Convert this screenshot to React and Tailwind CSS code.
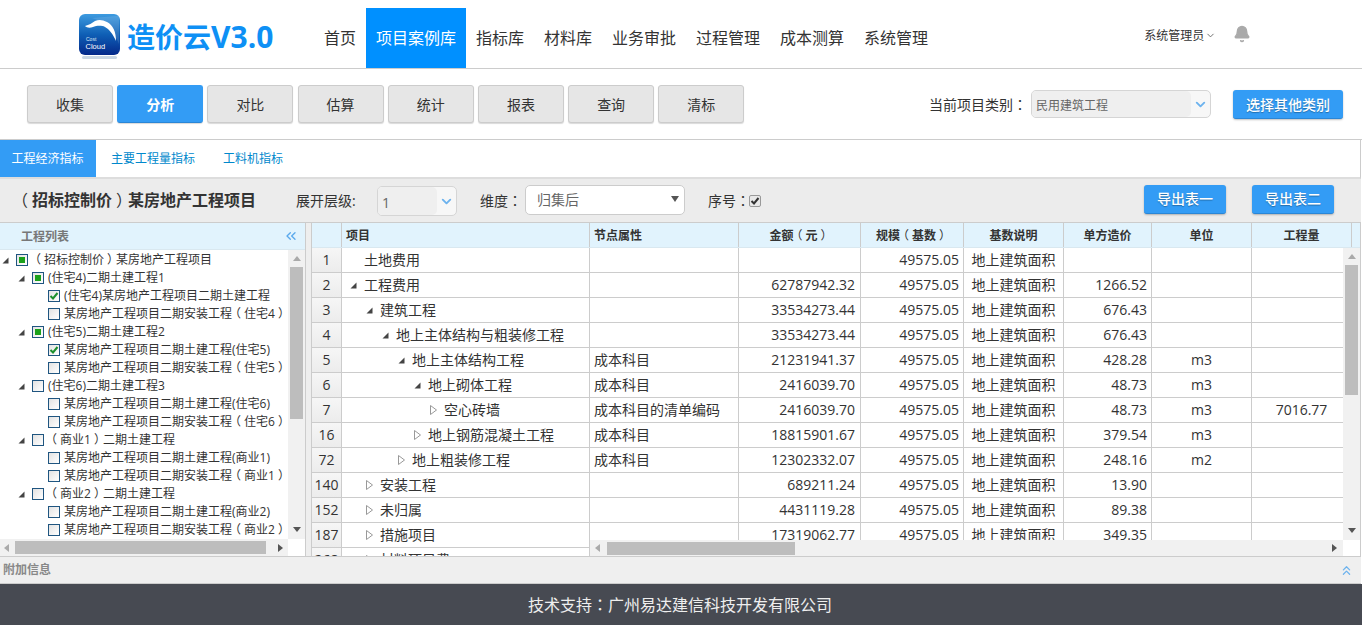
import { Bell, ChevronDown, ChevronsLeft, ChevronsUp } from 'lucide-react';

const navItems = ['首页', '项目案例库', '指标库', '材料库', '业务审批', '过程管理', '成本测算', '系统管理'];
const actions = ['收集', '分析', '对比', '估算', '统计', '报表', '查询', '清标'];
const tabs = ['工程经济指标', '主要工程量指标', '工料机指标'];

// level, state: partial | checked | empty
const treeRows = [
  [0, 'partial', '（招标控制价）某房地产工程项目'],
  [1, 'partial', '(住宅4)二期土建工程1'],
  [2, 'checked', '(住宅4)某房地产工程项目二期土建工程'],
  [2, 'empty', '某房地产工程项目二期安装工程（住宅4）'],
  [1, 'partial', '(住宅5)二期土建工程2'],
  [2, 'checked', '某房地产工程项目二期土建工程(住宅5)'],
  [2, 'empty', '某房地产工程项目二期安装工程（住宅5）'],
  [1, 'empty', '(住宅6)二期土建工程3'],
  [2, 'empty', '某房地产工程项目二期土建工程(住宅6)'],
  [2, 'empty', '某房地产工程项目二期安装工程（住宅6）'],
  [1, 'empty', '（商业1）二期土建工程'],
  [2, 'empty', '某房地产工程项目二期土建工程(商业1)'],
  [2, 'empty', '某房地产工程项目二期安装工程（商业1）'],
  [1, 'empty', '（商业2）二期土建工程'],
  [2, 'empty', '某房地产工程项目二期土建工程(商业2)'],
  [2, 'empty', '某房地产工程项目二期安装工程（商业2）'],
];

const area = '地上建筑面积';
const tableRows = [
  { no: 1, level: 0, icon: null, name: '土地费用', attr: '', amount: '', scale: '49575.05', basis: area, unitCost: '', unit: '', qty: '' },
  { no: 2, level: 0, icon: 'open', name: '工程费用', attr: '', amount: '62787942.32', scale: '49575.05', basis: area, unitCost: '1266.52', unit: '', qty: '' },
  { no: 3, level: 1, icon: 'open', name: '建筑工程', attr: '', amount: '33534273.44', scale: '49575.05', basis: area, unitCost: '676.43', unit: '', qty: '' },
  { no: 4, level: 2, icon: 'open', name: '地上主体结构与粗装修工程', attr: '', amount: '33534273.44', scale: '49575.05', basis: area, unitCost: '676.43', unit: '', qty: '' },
  { no: 5, level: 3, icon: 'open', name: '地上主体结构工程', attr: '成本科目', amount: '21231941.37', scale: '49575.05', basis: area, unitCost: '428.28', unit: 'm3', qty: '' },
  { no: 6, level: 4, icon: 'open', name: '地上砌体工程', attr: '成本科目', amount: '2416039.70', scale: '49575.05', basis: area, unitCost: '48.73', unit: 'm3', qty: '' },
  { no: 7, level: 5, icon: 'closed', name: '空心砖墙', attr: '成本科目的清单编码', amount: '2416039.70', scale: '49575.05', basis: area, unitCost: '48.73', unit: 'm3', qty: '7016.77' },
  { no: 16, level: 4, icon: 'closed', name: '地上钢筋混凝土工程', attr: '成本科目', amount: '18815901.67', scale: '49575.05', basis: area, unitCost: '379.54', unit: 'm3', qty: '' },
  { no: 72, level: 3, icon: 'closed', name: '地上粗装修工程', attr: '成本科目', amount: '12302332.07', scale: '49575.05', basis: area, unitCost: '248.16', unit: 'm2', qty: '' },
  { no: 140, level: 1, icon: 'closed', name: '安装工程', attr: '', amount: '689211.24', scale: '49575.05', basis: area, unitCost: '13.90', unit: '', qty: '' },
  { no: 152, level: 1, icon: 'closed', name: '未归属', attr: '', amount: '4431119.28', scale: '49575.05', basis: area, unitCost: '89.38', unit: '', qty: '' },
  { no: 187, level: 1, icon: 'closed', name: '措施项目', attr: '', amount: '17319062.77', scale: '49575.05', basis: area, unitCost: '349.35', unit: '', qty: '' },
  { no: 268, level: 1, icon: 'closed', name: '材料项目费', attr: '', amount: '', scale: '', basis: '', unitCost: '', unit: '', qty: '' },
];

// full-width brackets and colons sit centred in their cell in the reference
function Punct({ text }) {
  return text.split(/([（）：])/).map((part, i) => {
    if (i % 2 === 0) return part;
    if (part === '：') return <span key={i} className="font-['Noto_Sans_CJK_TC'] font-normal">{part}</span>;
    return <span key={i} className={`inline-block font-normal ${part === '（' ? '-translate-x-[0.25em]' : 'translate-x-[0.25em]'}`}>{part}</span>;
  });
}

function Logo() {
  return (
    <svg width="44" height="46" viewBox="0 0 44 46" className="shrink-0">
      <defs>
        <linearGradient id="logoBg" x1="0" y1="0" x2="0" y2="1">
          <stop offset="0" stopColor="#3d9be0" />
          <stop offset="0.5" stopColor="#0f5fb5" />
          <stop offset="1" stopColor="#04288a" />
        </linearGradient>
      </defs>
      <rect x="1" y="0" width="41" height="41" rx="6" fill="url(#logoBg)" />
      <path d="M38 2 H41 V30 C36 18 28 8 14 4 Z" fill="#fff" opacity="0.12" />
      <path d="M7 12 C11 11 14 9 17 7 C21 5 25 6 29 8 C35 11 38 18 38 27 C35 20 31 15 27 13 C23 11 18 12 15 13 C12 14 9 14 7 12 Z" fill="#fff" />
      <text x="8" y="27" fontSize="5" fill="#dbe9f7" fontFamily="Liberation Sans, sans-serif">Cost</text>
      <text x="7.5" y="35" fontSize="7.5" fill="#fff" fontFamily="Liberation Sans, sans-serif">Cloud</text>
      <rect x="4" y="42" width="35" height="3" rx="1.5" fill="#c9d6e4" />
    </svg>
  );
}

function Tri({ open }) {
  if (open) {
    return (
      <svg width="7" height="7" viewBox="0 0 7 7" className="shrink-0">
        <polygon points="0.5,6.5 6.5,0.5 6.5,6.5" fill="#444" />
      </svg>
    );
  }
  return (
    <svg width="7" height="10" viewBox="0 0 7 10" className="shrink-0">
      <polygon points="0.5,0.5 6.5,5 0.5,9.5" fill="#fff" stroke="#999" />
    </svg>
  );
}

function TreeCheck({ state }) {
  return (
    <span className="w-[12px] h-[12px] shrink-0 border border-[#1f5580] bg-gradient-to-br from-[#e2e2e2] to-white flex items-center justify-center">
      {state === 'partial' && <span className="w-[6px] h-[6px] bg-[#1ba11b]" />}
      {state === 'checked' && (
        <svg width="10" height="10" viewBox="0 0 10 10">
          <path d="M1.5 5 L4 7.5 L8.5 2" fill="none" stroke="#1c8f2c" strokeWidth="2" />
        </svg>
      )}
    </span>
  );
}

function BlueButton({ children, className }) {
  return (
    <button className={`bg-[#339cf5] text-white text-[14px] font-medium [text-shadow:0_1px_1px_rgba(0,0,0,0.3)] rounded-[3px] border-b border-[#2a86d6] shadow-[0_1px_2px_rgba(0,0,0,0.25)] ${className}`}>
      {children}
    </button>
  );
}

function ComboBox({ value, className, textClass = 'text-[12px]' }) {
  return (
    <div className={`flex border border-[#d5d5d5] rounded-[5px] bg-[#f7f7f7] overflow-hidden ${className}`}>
      <div className={`flex-1 bg-[#efefef] rounded-r-[5px] flex items-center pl-[4px] pt-[3px] text-[#666] ${textClass}`}>{value}</div>
      <div className="w-[19px] flex items-center justify-center">
        <ChevronDown size={15} strokeWidth={3} className="text-[#6db3ee]" />
      </div>
    </div>
  );
}

function ArrowBtn({ dir }) {
  const pts = { up: '0,6 8,6 4,1', down: '0,1 8,1 4,6', left: '6,0 6,8 1,4', right: '1,0 1,8 6,4' }[dir];
  const fill = dir === 'up' || dir === 'left' ? '#aaa' : '#555';
  return (
    <svg width="8" height="8" viewBox="0 0 8 8" className="shrink-0">
      <polygon points={pts} fill={fill} />
    </svg>
  );
}

function FrozenColumn() {
  return (
    <div className="w-[278px] shrink-0 flex flex-col overflow-hidden">
      <div className="h-[25px] shrink-0 flex bg-[#e1f3fd] border-b border-[#d9e8f0]">
        <div className="w-[30px] border-r border-[#ccc]" />
        <div className="flex-1 border-r border-[#ccc] pl-[4px] text-[12px] font-bold leading-[25px] text-[#333]">项目</div>
      </div>
      {tableRows.map((row) => (
        <div key={row.no} className="h-[25px] shrink-0 flex border-b border-[#ccc] text-[14px] text-[#333]">
          <div className="w-[30px] shrink-0 border-r border-[#ccc] bg-gradient-to-b from-[#f6f6f6] to-[#ececec] text-center text-[14px] leading-[24px]">{row.no}</div>
          <div className="flex-1 border-r border-[#ccc] flex items-center leading-[24px] whitespace-nowrap" style={{ paddingLeft: 8 + row.level * 16 }}>
            <span className="w-[14px] shrink-0 flex items-center">
              {row.icon && <Tri open={row.icon === 'open'} />}
            </span>
            <span>{row.name}</span>
          </div>
        </div>
      ))}
    </div>
  );
}

const colClass = {
  attr: 'w-[149px] text-left pl-[4px]',
  amount: 'w-[122px] text-right pr-[5px]',
  scale: 'w-[103px] text-right pr-[4px]',
  basis: 'w-[100px] text-center',
  unitCost: 'w-[88px] text-right pr-[4px]',
  unit: 'w-[100px] text-center',
  qty: 'w-[100px] text-center',
};

function ScrollColumns() {
  return (
    <div className="flex-1 min-w-0 flex flex-col overflow-hidden">
      <div className="h-[25px] shrink-0 flex bg-[#e1f3fd] border-b border-[#d9e8f0] text-[12px] font-bold leading-[25px] text-[#333] whitespace-nowrap">
        <div className="w-[149px] shrink-0 border-r border-[#ccc] pl-[4px]">节点属性</div>
        <div className="w-[122px] shrink-0 border-r border-[#ccc] text-center"><Punct text="金额（元）" /></div>
        <div className="w-[103px] shrink-0 border-r border-[#ccc] text-center"><Punct text="规模（基数）" /></div>
        <div className="w-[100px] shrink-0 border-r border-[#ccc] text-center">基数说明</div>
        <div className="w-[88px] shrink-0 border-r border-[#ccc] text-center">单方造价</div>
        <div className="w-[100px] shrink-0 border-r border-[#ccc] text-center">单位</div>
        <div className="w-[100px] shrink-0 border-r border-[#ccc] text-center">工程量</div>
      </div>
      <div className="h-[292px] shrink-0 flex">
        <div className="w-[753px] shrink-0 overflow-hidden">
          {tableRows.slice(0, 12).map((row) => (
            <div key={row.no} className="h-[25px] flex border-b border-[#ccc] text-[14px] leading-[24px] text-[#333] whitespace-nowrap">
              {Object.keys(colClass).map((key) => (
                <div key={key} className={`${colClass[key]} shrink-0 border-r border-[#ccc]`}>{row[key]}</div>
              ))}
            </div>
          ))}
        </div>
        <div className="flex-1 bg-[#f1f1f1] flex flex-col items-center py-[5px]">
          <ArrowBtn dir="up" />
          <div className="w-[13px] h-[130px] bg-[#bdbdbd] mt-[4px]" />
          <span className="mt-auto flex"><ArrowBtn dir="down" /></span>
        </div>
      </div>
      <div className="flex-1 flex">
        <div className="w-[753px] shrink-0 bg-[#f1f1f1] flex items-center pl-[4px] pr-[4px]">
          <ArrowBtn dir="left" />
          <div className="w-[188px] h-[13px] bg-[#bdbdbd] ml-[5px]" />
          <span className="ml-auto flex"><ArrowBtn dir="right" /></span>
        </div>
        <div className="flex-1 bg-white" />
      </div>
    </div>
  );
}

function TreePanel() {
  return (
    <div className="w-[306px] shrink-0 flex flex-col border-r border-[#ccc]">
      <div className="h-[27px] shrink-0 bg-[#e1f3fd] border-b border-[#d9e8f0] flex items-center justify-between pl-[21px] pr-[6px]">
        <span className="text-[12px] font-bold text-[#777] pt-[2px]">工程列表</span>
        <ChevronsLeft size={16} className="text-[#5aa9ec]" />
      </div>
      <div className="flex-1 min-h-0 flex">
        <div className="w-[288px] shrink-0 overflow-hidden pt-px">
          {treeRows.map(([level, state, label], i) => (
            <div key={i} className="h-[18px] flex items-center whitespace-nowrap text-[12px] text-[#333]" style={{ paddingLeft: 2 + level * 16 }}>
              <span className="w-[14px] shrink-0 flex items-center">
                {level < 2 && <Tri open />}
              </span>
              <TreeCheck state={state} />
              <span className="ml-[4px]"><Punct text={label} /></span>
            </div>
          ))}
        </div>
        <div className="flex-1 bg-[#f1f1f1] flex flex-col items-center py-[5px]">
          <ArrowBtn dir="up" />
          <div className="w-[13px] h-[152px] bg-[#bdbdbd] mt-[4px]" />
          <span className="mt-auto flex"><ArrowBtn dir="down" /></span>
        </div>
      </div>
      <div className="h-[17px] shrink-0 flex">
        <div className="w-[288px] bg-[#f1f1f1] flex items-center pl-[3px] pr-[3px]">
          <ArrowBtn dir="left" />
          <div className="w-[251px] h-[13px] bg-[#bdbdbd] ml-[4px]" />
          <span className="ml-auto flex"><ArrowBtn dir="right" /></span>
        </div>
      </div>
    </div>
  );
}

export default function App() {
  return (
    <div className="w-[1362px] h-[625px] overflow-hidden bg-white flex flex-col font-['Open_Sans','Noto_Sans_CJK_SC',sans-serif] text-[#333]">
      {/* top nav */}
      <div className="h-[69px] shrink-0 border-b border-[#ccc] flex pt-[8px]">
        <div className="w-[314px] shrink-0 flex pl-[78px] pt-[6px] gap-[5px]">
          <Logo />
          <span className="text-[28px] font-bold text-[#0e90f5] leading-[30px] mt-[8px] whitespace-nowrap">
            造价云<span className="text-[30px]">V3.0</span>
          </span>
        </div>
        {navItems.map((item) => (
          <div key={item} className={`px-[10px] h-[60px] flex items-center text-[16px] ${item === '项目案例库' ? 'bg-[#0090ff] text-white' : 'text-[#333]'}`}>
            {item}
          </div>
        ))}
        <div className="ml-[206px] flex items-start pt-[19px] text-[12px] h-full">
          <span>系统管理员</span>
          <ChevronDown size={11} className="text-[#666] mt-[3px] ml-[1px]" />
          <Bell size={18} fill="#aaa" className="text-[#aaa] ml-[17px] -mt-[2px]" />
        </div>
      </div>

      {/* action buttons */}
      <div className="h-[71px] shrink-0 border-b border-[#ccc] flex items-center pl-[27px] pr-[19px]">
        <div className="flex gap-[4.2px]">
          {actions.map((a) => (
            <button
              key={a}
              className={`w-[86px] h-[38px] rounded-[3px] text-[14px] border shadow-[0_1px_1px_rgba(0,0,0,0.15)] ${a === '分析' ? 'bg-[#339cf5] border-[#339cf5] border-b-[#2a86d6] text-white font-semibold' : 'bg-[#e6e6e6] border-[#ccc] text-[#333]'}`}
            >
              {a}
            </button>
          ))}
        </div>
        <div className="ml-auto flex items-center">
          <span className="text-[14px] w-[102px]"><Punct text="当前项目类别：" /></span>
          <ComboBox value="民用建筑工程" className="w-[180px] h-[28px]" />
          <BlueButton className="w-[110px] h-[29px] ml-[22px] pt-[2px]">选择其他类别</BlueButton>
        </div>
      </div>

      {/* tabs */}
      <div className="h-[39px] shrink-0 border-b-2 border-[#ddd] flex w-[1361px] border-r border-r-[#ccc]">
        {tabs.map((t, i) => (
          <div key={t} className={`h-[37px] flex items-center pt-[1px] text-[12px] ${i === 0 ? 'w-[96px] justify-center pr-[1px] bg-[#339cf5] text-white' : 'text-[#0088cc] ml-[15px] mr-[13px]'}`}>
            {t}
          </div>
        ))}
      </div>

      {/* filter bar */}
      <div className="h-[43px] shrink-0 bg-[#ececec] flex items-center pl-[16px] w-[1361px]">
        <span className="text-[16px] font-bold w-[280px] -mt-[2px] whitespace-nowrap"><Punct text="（招标控制价）某房地产工程项目" /></span>
        <span className="text-[14px] w-[81px] whitespace-nowrap">展开层级:</span>
        <ComboBox value="1" className="w-[80px] h-[30px] mt-[1px]" textClass="text-[14px]" />
        <span className="text-[14px] ml-[23px] w-[45px] whitespace-nowrap"><Punct text="维度：" /></span>
        <div className="w-[160px] h-[30px] -mt-[2px] bg-white border border-[#ccc] rounded-[5px] flex items-center justify-between pl-[11px] pr-[5px] text-[14px] text-[#666]">
          <span>归集后</span>
          <svg width="8" height="6" viewBox="0 0 8 6" className="-mt-[1px]"><polygon points="0,0 8,0 4,6" fill="#555" /></svg>
        </div>
        <span className="text-[14px] ml-[23px] w-[41px] whitespace-nowrap"><Punct text="序号：" /></span>
        <span className="w-[12px] h-[12px] border border-[#999] rounded-[2px] bg-[#e8e8e8] flex items-center justify-center">
          <svg width="10" height="10" viewBox="0 0 10 10"><path d="M1.5 5 L4 7.5 L8.5 2" fill="none" stroke="#333" strokeWidth="2" /></svg>
        </span>
        <BlueButton className="w-[82px] h-[29px] ml-[383px] -mt-[3px]">导出表一</BlueButton>
        <BlueButton className="w-[82px] h-[29px] ml-[26px] -mt-[3px]">导出表二</BlueButton>
      </div>

      {/* main split */}
      <div className="h-[334px] shrink-0 flex w-[1361px] border-t border-[#ccc] border-r border-r-[#ccc]">
        <TreePanel />
        <div className="w-[6px] shrink-0 bg-[#eee] border-r border-[#ccc]" />
        <FrozenColumn />
        <ScrollColumns />
      </div>

      {/* extra info */}
      <div className="h-[28px] shrink-0 bg-[#efefef] border-t border-b border-[#ccc] flex items-center justify-between pl-[3px] pr-[7px] w-[1361px]">
        <span className="text-[12px] font-bold text-[#888]">附加信息</span>
        <ChevronsUp size={15} className="text-[#6db3ee]" />
      </div>

      {/* footer */}
      <div className="flex-1 bg-[#474a52] flex items-center justify-center pr-[2px] text-[16px] text-[#eee]">
        <span><Punct text="技术支持：广州易达建信科技开发有限公司" /></span>
      </div>
    </div>
  );
}
